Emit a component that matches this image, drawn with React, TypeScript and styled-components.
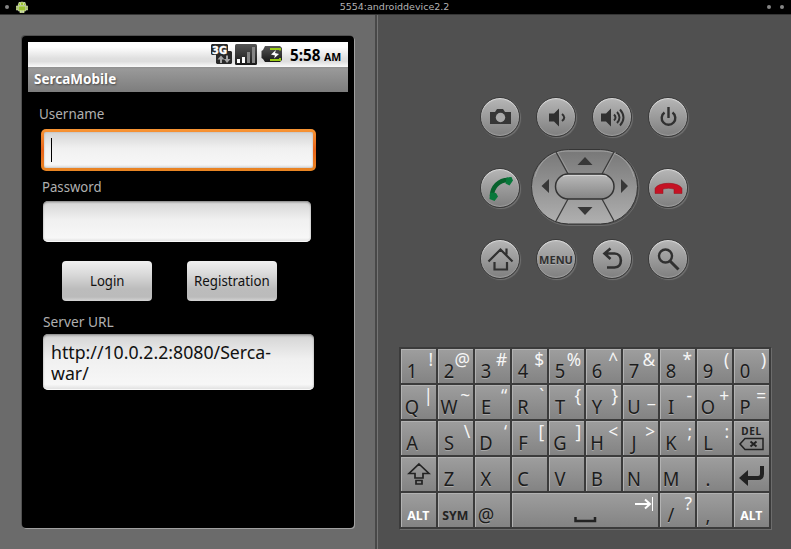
import React from "react";
import styled, { createGlobalStyle } from "styled-components";

const Global = createGlobalStyle`
  * { box-sizing: border-box; }
  body { margin: 0; background: #505050; font-family: "Noto Sans", "Open Sans", sans-serif; }
`;

const Window = styled.div`
  width: 791px;
  height: 549px;
  overflow: hidden;
  display: flex;
  flex-direction: column;
`;

const TitleBar = styled.header`
  height: 15px;
  flex: none;
  background: #000;
  border-bottom: 1px solid #353535;
  color: #b4b4b4;
  font: 9.5px/14px "DejaVu Sans", sans-serif;
  display: grid;
  grid-template-columns: 1fr auto 1fr;
  align-items: center;
  padding: 0 7px 0 5px;
`;

const TitleSide = styled.div<{ $end?: boolean }>`
  display: flex;
  align-items: center;
  gap: ${(p) => (p.$end ? 9 : 7)}px;
  justify-content: ${(p) => (p.$end ? "flex-end" : "flex-start")};
`;

const Dot = styled.i`
  width: 4px;
  height: 4px;
  border-radius: 50%;
  background: #858585;
`;

const Body = styled.main`
  flex: 1;
  display: flex;
`;

const PhonePanel = styled.section`
  width: 378px;
  flex: none;
  padding: 21px 0 0 22px;
  background: #6b6b6b;
  border-right: 1px solid #757575;
  box-shadow: inset -2px 0 #484848;
`;

const Phone = styled.div`
  width: 332px;
  height: 492px;
  padding: 6px;
  background: #000;
  border-radius: 4px;
  box-shadow: 1px 1px 0 #a0a0a0, -1px -1px 0 #505050;
`;

const StatusBar = styled.div`
  height: 25px;
  display: flex;
  align-items: center;
  justify-content: flex-end;
  padding-right: 6px;
  background: linear-gradient(#fff 20%, #e0e0e0 65%, #dedede 78%, #fafafa);
`;

const Clock = styled.div`
  display: flex;
  align-items: baseline;
  color: #000;
  font-weight: 700;
  line-height: 24px;
  margin-left: 6px;
  padding-top: 2px;
`;

const Fit = styled.span<{ $size: number; $width: number; $x?: number }>`
  display: block;
  width: ${(p) => p.$width}px;
  font-size: ${(p) => p.$size}px;
  white-space: nowrap;
  transform: scaleX(${(p) => p.$x ?? 0.94});
  transform-origin: left;
`;

const AppTitle = styled.h1`
  margin: 0;
  height: 25px;
  padding-left: 6px;
  color: #fff;
  font-weight: 700;
  line-height: 24px;
  text-shadow: 1px 1px 2px #444;
  background: linear-gradient(#8f8f8f, #999 8%, #7d7d7d);
`;

const Form = styled.form`
  padding: 12px 0 0 11px;
  display: flex;
  flex-direction: column;
  align-items: flex-start;
`;

const Label = styled.label<{ $indent?: number; $top?: number }>`
  margin: ${(p) => p.$top ?? 0}px 0 0 ${(p) => p.$indent ?? 0}px;
  height: 19px;
  line-height: 19px;
  color: #b0b0b0;
`;

const Field = styled.div<{ $focus?: boolean; $w: number; $h: number; $indent: number; $top: number }>`
  width: ${(p) => p.$w}px;
  height: ${(p) => p.$h}px;
  margin: ${(p) => p.$top}px 0 0 ${(p) => p.$indent}px;
  padding: ${(p) => (p.$focus ? "6px 7px" : "8px")};
  border: ${(p) => (p.$focus ? "3px solid transparent" : "0")};
  border-radius: 5px;
  background:
    ${(p) =>
      p.$focus
        ? "linear-gradient(#d4d4d4, #f0f0f0 45%, #f7f7f7 90%, #ddd) padding-box, linear-gradient(#f79534, #e8641b 50%, #e98623) border-box"
        : "linear-gradient(#bbb, #d8d8d8 7%, #f0f0f0 45%, #f7f7f7 90%, #ddd)"};
  box-shadow: ${(p) => (p.$focus ? "inset 0 0 2px #aaa" : "inset 0 1px 2px #888, inset 0 -1px 0 #fff")};
  color: #111;
  line-height: 21px;
`;

const Caret = styled.i`
  display: block;
  width: 1px;
  height: 24px;
  background: #000;
`;

const Buttons = styled.div`
  display: flex;
  gap: 35px;
  margin: 19px 0 0 23px;
`;

const Button = styled.button`
  width: 90px;
  height: 40px;
  border: 0;
  border-radius: 4px;
  padding: 0 0 1px 7px;
  display: flex;
  align-items: center;
  justify-content: flex-start;
  color: #111;
  font-family: inherit;
  background: linear-gradient(#f0f0f0, #d8d8d8 35%, #bcbcbc 70%, #bbb 90%, #d4d4d4);
`;

const LoginButton = styled(Button)`
  padding-left: 28px;
`;

const ControlPanel = styled.section`
  flex: 1;
  background: #505050;
  padding: 82px 0 0 21px;
`;

const Pad = styled.div`
  display: grid;
  grid-template-columns: repeat(4, 40px);
  grid-template-rows: repeat(3, 40px);
  column-gap: 16px;
  row-gap: 31px;
  margin-left: 81px;
`;

const RoundKey = styled.button`
  width: 40px;
  height: 40px;
  padding: 0;
  border: 1px solid #3a3a3a;
  border-radius: 50%;
  display: grid;
  place-items: center;
  background: linear-gradient(#b6b6b6, #7f7f7f);
  box-shadow: inset 0 1px 1px #ddd, inset 0 -1px 1px #a0a0a0, 1px 1px 1px #737373;
  color: #303030;
  font: 700 11px/1 "Noto Sans", sans-serif;
  text-shadow: 0 1px #b0b0b0;
`;

const DPadCell = styled.div`
  grid-column: 2 / 4;
  display: grid;
  place-items: center;
  margin: -21px -11px -19px -9px;
`;

const Keyboard = styled.div`
  margin-top: 68px;
  width: 372px;
  height: 182px;
  padding: 2px;
  display: grid;
  grid-template-columns: repeat(10, 35px);
  grid-auto-rows: 34px;
  gap: 2px;
  background: #3b3b3b;
  box-shadow: 1px 1px 0 #6c6c6c;
`;

const Key = styled.div<{ $wide?: boolean }>`
  grid-column: span ${(p) => (p.$wide ? 4 : 1)};
  display: flex;
  justify-content: space-between;
  overflow: hidden;
  background: linear-gradient(#9e9e9e, #838383);
  box-shadow: inset 1px 1px 0 #b2b2b2;
`;

const Main = styled.span`
  flex: none;
  width: 22px;
  display: flex;
  justify-content: center;
  font-size: 19.5px;
  line-height: 20px;
  padding-top: 12px;
  color: #1c1c1c;
  text-shadow: 0 1px #a9a9a9;
  transform: scaleX(0.94);
`;

const Alt = styled.span`
  width: 13px;
  display: flex;
  justify-content: flex-end;
  padding-right: 3px;
  font-size: 18px;
  line-height: 20px;
  color: #f6f6f6;
  transform: scaleX(0.96);
  transform-origin: right;
`;

const WordKey = styled(Key)<{ $light?: boolean }>`
  justify-content: center;
  padding-top: 13px;
  font-weight: 700;
  font-size: 12.5px;
  line-height: 20px;
  color: ${(p) => (p.$light ? "#fff" : "#222")};
`;

const Squeeze = styled.span`
  transform: scaleX(0.98);
`;

const IconKey = styled(Key)`
  justify-content: center;
  align-items: center;
`;

const DelKey = styled(Key)`
  flex-direction: column;
  justify-content: flex-start;
  align-items: center;
  padding-top: 5px;
  font-weight: 700;
  font-size: 10px;
  line-height: 11px;
  letter-spacing: 0.6px;
  color: #222;
`;

const Robot = () => (
  <svg width="12" height="12" viewBox="0 0 12 12">
    <path d="M3 1l1 2m5-2L8 3" stroke="#dfe9c8" />
    <path d="M2 4.5a4 3.5 0 0 1 8 0zM2.4 5h7.2v5H2.4zM.3 5h1.5v4H.3zm9.9 0h1.5v4h-1.5zM4 10h1.5v2H4zm2.5 0H8v2H6.5z" fill="#9bc32f" stroke="#e9f2d4" strokeWidth=".6" />
    <path d="M4 3h1m2 0h1" stroke="#fff" />
  </svg>
);

const StatusIcons = () => (
  <svg width="74" height="25" viewBox="0 0 74 25">
    <defs>
      <linearGradient id="dark" x2="0" y2="1"><stop stopColor="#555" /><stop offset="1" stopColor="#181818" /></linearGradient>
    </defs>
    <path d="M2 2h15l1 1v6h3l1 1v11l-1 1H7l-1-1v-8H2l-1-1V3z" fill="#292929" />
    <text x="2" y="11.500" fill="#fff" stroke="#fff" strokeWidth=".4" fontFamily="DejaVu Sans" fontWeight="700" fontSize="10.500" textLength="15" lengthAdjust="spacingAndGlyphs">3G</text>
    <path d="M11 13.500l3.500 4H12V21h-2v-3.500H7.500zM16 13.500h2V17h2.500L17 21l-3-4h2z" fill="#a5a5a5" />
    <rect x="25" y="2" width="22" height="21" rx="1.500" fill="url(#dark)" />
    <path d="M27 17h3v4h-3zm5-2h3v6h-3z" fill="#fff" />
    <path d="M37 10h3v11h-3zm5-5h3v16h-3z" fill="#858585" />
    <path d="M55 4h15l2 2v12l-2 2H55l-2-3-1.500-1v-7l1.500-1z" fill="url(#dark)" />
    <path d="M60 7h10v1.500m0 7.500v2H60" fill="none" stroke="#9acb15" strokeWidth="2" />
    <path d="M66 8l-5 4.500 4 1-1 3 5-4.500-4-1z" fill="#fff" />
  </svg>
);

const DPad = () => (
  <svg width="112" height="80" viewBox="0 0 112 80">
    <defs>
      <linearGradient id="pad" x2="0" y2="1"><stop stopColor="#777" /><stop offset="1" stopColor="#b0b0b0" /></linearGradient>
      <linearGradient id="mid" x2="0" y2="1"><stop stopColor="#bababa" /><stop offset="1" stopColor="#858585" /></linearGradient>
    </defs>
    <rect x="3" y="3.500" width="107" height="75" rx="37" fill="none" stroke="#6c6c6c" />
    <rect x="2.500" y="2.500" width="106" height="74.500" rx="37" fill="url(#pad)" stroke="#353535" />
    <path d="M6 30C10 14 23 4 39 4h33c16 0 29 10 33 26" fill="none" stroke="#a3a3a3" />
    <path d="M27 5l12 22M85 5L73 27M27 74l12-22M85 74L73 52" stroke="#3b3b3b" strokeWidth="1.300" />
    <path d="M28.500 5l11 20M86.500 5l-11 20" stroke="#aaa" strokeWidth=".6" />
    <rect x="26.500" y="27" width="58.500" height="25" rx="12.500" fill="url(#mid)" stroke="#333" strokeWidth="1.500" />
    <path d="M34 29.500q2-1 5-1h34q3 0 5 1" fill="none" stroke="#d5d5d5" />
    <path d="M56 10l7.500 8h-15zM56 68l7.500-8h-15zM12.500 39l7.500-7v14zM99 39l-7-7v14z" fill="#373737" />
  </svg>
);

type Glyph = "camera" | "low" | "high" | "power" | "call" | "end" | "home" | "back" | "search";

const line = { fill: "none", stroke: "#303030", strokeWidth: 2.4 };
const shapes: Record<Glyph, React.ReactNode> = {
  camera: (
    <>
      <path d="M4 9h5l2-3h6l2 3h6v12H4z" fill="#363636" />
      <circle cx="14.500" cy="14.500" r="4.700" fill="#aaa" />
    </>
  ),
  low: (
    <>
      <path d="M7 10.500h5l5-5v18l-5-5H7z" fill="#303030" />
      <path d="M20 11q4.500 3.500 0 7" {...line} strokeWidth={2} />
    </>
  ),
  high: (
    <>
      <path d="M3 10.500h5l5-5v18l-5-5H3z" fill="#303030" />
      <path d="M16 11.500q3 3 0 6M19 9q5 5.500 0 11M22 6.500q7 8 0 16" {...line} strokeWidth={1.900} />
    </>
  ),
  power: <path d="M10.500 9.500a6.800 6.800 0 1 0 8 0M14.500 4v11" {...line} />,
  call: (
    <>
      <path d="M22 6C13 6 6 13 6 22" fill="none" stroke="#07612c" strokeWidth="4.400" />
      <path d="M20.500 3.500l5-.5 1.500 3.500-3.500 5-4-2zM4 18.500l6 .5 2 3.500-3.500 4.500-5-2z" fill="#08783b" />
    </>
  ),
  end: <path d="M1 19.500v-5C4 7.500 25 7.500 28 14.500v5h-8v-4.500q-5.500-1.500-11 0v4.500z" fill="#c51224" stroke="#92101a" strokeWidth=".5" />,
  home: <path d="M2.500 16.500L14.500 4.500l12 12M20.500 3.500v6M8.500 17v7.500H21V17" {...line} strokeWidth={2.200} />,
  back: <path d="M12.500 3.500L6.500 8.500l6 5.500M7 8.500h9.500c8.500 0 8.500 14 0 14H9" {...line} strokeWidth={2.600} />,
  search: (
    <>
      <circle cx="11.500" cy="11" r="6.500" {...line} />
      <path d="M16 16l8.500 8.500" {...line} strokeWidth={3} />
    </>
  ),
};

const Icon = ({ name }: { name: Glyph }) => (
  <svg width="29" height="29" viewBox="0 0 29 29">{shapes[name]}</svg>
);

const rows: string[][] = [
  ["1!", "2@", "3#", "4$", "5%", "6^", "7&", "8*", "9(", "0)"],
  ["Q|", "W~", "E“", "R`", "T{", "Y}", "U_", "I-", "O+", "P="],
  ["A", "S\\", "D‘", "F[", "G]", "H<", "J>", "K;", "L:"],
];

const CharKey = ({ chars }: { chars: string }) => (
  <Key>
    <Main>{chars[0]}</Main>
    {chars[1] && <Alt>{chars[1]}</Alt>}
  </Key>
);

export default function App() {
  return (
    <Window>
      <Global />
      <TitleBar>
        <TitleSide><Dot /><Robot /></TitleSide>
        <span>5554:androiddevice2.2</span>
        <TitleSide $end><Dot /><Dot /></TitleSide>
      </TitleBar>
      <Body>
        <PhonePanel>
          <Phone>
            <StatusBar>
              <StatusIcons />
              <Clock>
                <Fit $size={16} $width={34} $x={0.95}>5:58</Fit>
                <Fit $size={11} $width={18} $x={0.96}>AM</Fit>
              </Clock>
            </StatusBar>
            <AppTitle><Fit $size={14} $width={84} $x={0.965}>SercaMobile</Fit></AppTitle>
            <Form>
              <Label><Fit $size={14} $width={66} $x={0.96}>Username</Fit></Label>
              <Field $focus $w={275} $h={42} $indent={2} $top={6}><Caret /></Field>
              <Label $indent={3} $top={6}><Fit $size={14} $width={60}>Password</Fit></Label>
              <Field $w={268} $h={41} $indent={4} $top={5} />
              <Buttons>
                <LoginButton type="button"><Fit $size={14} $width={35}>Login</Fit></LoginButton>
                <Button type="button"><Fit $size={14} $width={76} $x={0.95}>Registration</Fit></Button>
              </Buttons>
              <Label $indent={4} $top={11}><Fit $size={14} $width={72} $x={0.98}>Server URL</Fit></Label>
              <Field $w={271} $h={56} $indent={4} $top={3}>
                <Fit $size={18} $width={222} $x={0.983}>http://10.0.2.2:8080/Serca-<br />war/</Fit>
              </Field>
            </Form>
          </Phone>
        </PhonePanel>
        <ControlPanel>
          <Pad>
            <RoundKey><Icon name="camera" /></RoundKey>
            <RoundKey><Icon name="low" /></RoundKey>
            <RoundKey><Icon name="high" /></RoundKey>
            <RoundKey><Icon name="power" /></RoundKey>
            <RoundKey><Icon name="call" /></RoundKey>
            <DPadCell><DPad /></DPadCell>
            <RoundKey><Icon name="end" /></RoundKey>
            <RoundKey><Icon name="home" /></RoundKey>
            <RoundKey>MENU</RoundKey>
            <RoundKey><Icon name="back" /></RoundKey>
            <RoundKey><Icon name="search" /></RoundKey>
          </Pad>
          <Keyboard>
            {rows.flat().map((k) => <CharKey key={k} chars={k} />)}
            <DelKey>
              DEL
              <svg width="25" height="14" viewBox="0 0 25 14">
                <path d="M6 1.500h18v11H6L1 7z" fill="none" stroke="#222" strokeWidth="1.500" />
                <path d="M11.500 4.500l6 5m0-5l-6 5" stroke="#222" strokeWidth="2" />
              </svg>
            </DelKey>
            <IconKey>
              <svg width="24" height="24" viewBox="0 0 24 24">
                <path d="M12 2l10 9.500h-6V16H8v-4.500H2zM9 18.500h6v3.500H9z" fill="none" stroke="#222" strokeWidth="1.700" />
              </svg>
            </IconKey>
            {[..."ZXCVBNM."].map((k) => <CharKey key={k} chars={k} />)}
            <IconKey>
              <svg width="27" height="24" viewBox="0 0 27 24">
                <path d="M24 4v8q0 4-4 4H8" fill="none" stroke="#222" strokeWidth="4" />
                <path d="M1 16l9-8v16z" fill="#222" />
              </svg>
            </IconKey>
            <WordKey $light><Squeeze>ALT</Squeeze></WordKey>
            <WordKey><Squeeze>SYM</Squeeze></WordKey>
            <CharKey chars="@" />
            <IconKey $wide>
              <svg width="146" height="34" viewBox="0 0 146 34">
                <path d="M63.500 24v4h19.500v-4" fill="none" stroke="#222" strokeWidth="2.500" />
                <path d="M123 11h14M133 6.500l5 4.500-5 4.500" fill="none" stroke="#fff" strokeWidth="2" />
                <path d="M140.500 4v14" stroke="#fff" />
              </svg>
            </IconKey>
            <CharKey chars="/?" />
            <CharKey chars="," />
            <WordKey $light><Squeeze>ALT</Squeeze></WordKey>
          </Keyboard>
        </ControlPanel>
      </Body>
    </Window>
  );
}
